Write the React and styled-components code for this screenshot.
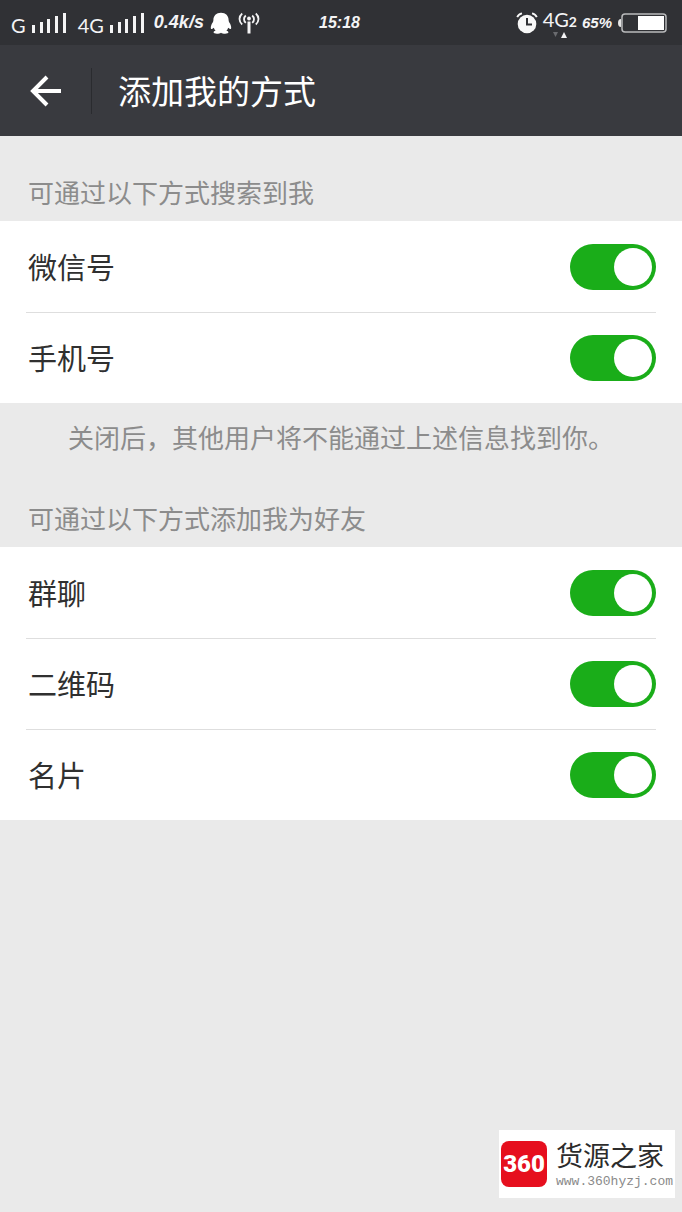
import React, { useState } from 'react';
import styled, { createGlobalStyle } from 'styled-components';

const searchOptions = [
  { id: 'wechat', label: '微信号' },
  { id: 'phone', label: '手机号' },
];

const friendOptions = [
  { id: 'group', label: '群聊' },
  { id: 'qrcode', label: '二维码' },
  { id: 'card', label: '名片' },
];

const SignalIcon = () => (
  <svg width="36" height="22" viewBox="0 0 36 22" fill="#f4f4f5" aria-hidden="true">
    <rect x="0" y="13" width="3" height="8" />
    <rect x="8" y="10" width="3" height="11" />
    <rect x="15" y="7" width="3" height="14" />
    <rect x="23" y="4" width="3" height="17" />
    <rect x="31" y="1" width="3" height="20" />
  </svg>
);

const PenguinIcon = () => (
  <svg width="22" height="22" viewBox="0 0 22 22" fill="#ffffff" aria-hidden="true">
    <path d="M11 .8C6.200.8 3.400 4 3.400 8c0 1-.2 1.500-.7 2.400C1.400 12.200.8 14 .8 15.800c0 1.400.8 1.600 1.600.9l1.400-1c.4 1.200 1 2.200 1.800 3.100-1.200.3-2 .8-2 1.500 0 1 1.500 1.400 3.300 1.400 1.700 0 3.200-.3 4.100-1 .9.7 2.400 1 4.100 1 1.800 0 3.300-.4 3.300-1.400 0-.7-.8-1.200-2-1.500.8-.9 1.400-1.900 1.800-3.100l1.400 1c.8.7 1.600.5 1.600-.9 0-1.800-.6-3.600-1.900-5.400-.5-.9-.7-1.400-.7-2.400C18.600 4 15.800.8 11 .8z" />
  </svg>
);

const AntennaIcon = () => (
  <svg width="22" height="22" viewBox="0 0 22 22" fill="none" stroke="#f4f4f5" strokeWidth="1.8" aria-hidden="true">
    <path d="M4.200 1.500C.6 4.600.6 9.400 4.200 12.500M7.800 3.500C5.400 5.600 5.400 8.800 7.800 10.900M17.800 1.500c3.600 3.100 3.600 7.900 0 11M14.200 3.500c2.400 2.100 2.400 5.300 0 7.400" />
    <circle cx="11" cy="6.500" r="1.900" fill="#f4f4f5" stroke="none" />
    <path d="M11 9.500V21.500" strokeWidth="3" />
  </svg>
);

const AlarmIcon = () => (
  <svg width="22" height="22" viewBox="0 0 22 22" fill="none" aria-hidden="true">
    <circle cx="11" cy="12" r="9.300" fill="#f8f8f8" />
    <path d="M11 6V12.500H16" stroke="#303135" strokeWidth="2" />
    <path d="M1.200 5.200C2 3.200 3.700 1.800 6 1.300M20.800 5.200C20 3.200 18.300 1.800 16 1.300" stroke="#f8f8f8" strokeWidth="1.800" />
  </svg>
);

const DataArrows = () => (
  <svg width="16" height="6" viewBox="0 0 16 6" aria-hidden="true">
    <path d="M1 0h5L3.500 5z" fill="#6a6b6f" />
    <path d="M9 6h6L12 0z" fill="#f4f4f5" />
  </svg>
);

const BatteryIcon = () => (
  <svg width="51" height="22" viewBox="0 0 51 22" aria-hidden="true">
    <path d="M4 7C2 7 1 8.500 1 11s1 4 3 4z" fill="#e6e6e6" />
    <rect x="5" y="2" width="44" height="18" rx="3" fill="none" stroke="#b9babc" strokeWidth="1.500" />
    <rect x="21" y="4" width="26" height="14" fill="#ffffff" />
  </svg>
);

const BackIcon = () => (
  <svg width="34" height="34" viewBox="0 0 34 34" fill="none" stroke="#ffffff" strokeWidth="4" aria-hidden="true">
    <path d="M32 17H4M18 3L4 17l14 14" />
  </svg>
);

const SettingRow = ({ id, label }) => {
  const [checked, setChecked] = useState(true);

  return (
    <Row>
      <RowLabel htmlFor={id}>{label}</RowLabel>
      <Switch id={id} checked={checked} onChange={() => setChecked(!checked)} />
    </Row>
  );
};

const App = () => {
  return (
    <Page>
      <GlobalStyle />

      <StatusBar>
        <StatusGroup>
          <Network>G</Network>
          <SignalIcon />
          <Network $spaced>4G</Network>
          <SignalIcon />
          <Speed>0.4k/s</Speed>
          <PenguinIcon />
          <AntennaIcon />
        </StatusGroup>
        <Clock>15:18</Clock>
        <StatusGroup $end>
          <AlarmIcon />
          <DataType>
            <span>4G<b>2</b></span>
            <DataArrows />
          </DataType>
          <BatteryLevel>65%</BatteryLevel>
          <BatteryIcon />
        </StatusGroup>
      </StatusBar>

      <Header>
        <BackButton type="button" aria-label="返回">
          <BackIcon />
        </BackButton>
        <Title>添加我的方式</Title>
      </Header>

      <main>
        <SectionTitle>可通过以下方式搜索到我</SectionTitle>
        <List>
          {searchOptions.map(option => (
            <SettingRow key={option.id} {...option} />
          ))}
        </List>
        <Hint>关闭后，其他用户将不能通过上述信息找到你。</Hint>

        <SectionTitle $compact>可通过以下方式添加我为好友</SectionTitle>
        <List>
          {friendOptions.map(option => (
            <SettingRow key={option.id} {...option} />
          ))}
        </List>
      </main>

      <Watermark>
        <Badge>360</Badge>
        <div>
          <SiteName>货源之家</SiteName>
          <SiteUrl>www.360hyzj.com</SiteUrl>
        </div>
      </Watermark>
    </Page>
  );
};

const GlobalStyle = createGlobalStyle`
  * {
    box-sizing: border-box;
  }

  body {
    margin: 0;
    background: #eaeaea;
    font-family: "Liberation Sans", "Noto Sans CJK SC", sans-serif;
  }

  svg {
    flex-shrink: 0;
  }
`;

const Page = styled.div`
  position: relative;
  min-height: 100vh;
  background: #eaeaea;
`;

// Barra de status
const StatusBar = styled.div`
  display: grid;
  grid-template-columns: 1fr auto 1fr;
  align-items: center;
  height: 45px;
  padding: 0 14px 0 11px;
  background: #303135;
  color: #f4f4f5;
`;

const StatusGroup = styled.div`
  display: flex;
  align-items: center;
  justify-content: ${props => props.$end ? 'flex-end' : 'flex-start'};
  gap: ${props => props.$end ? '5px' : '6px'};
`;

const Network = styled.span`
  margin-left: ${props => props.$spaced ? '4px' : '0'};
  padding-top: 4px;
  font-family: Lato, sans-serif;
  font-size: 20px;
  line-height: 24px;
`;

const Speed = styled.span`
  margin-left: 2px;
  font-size: 18px;
  font-style: italic;
  font-weight: 700;
`;

const Clock = styled.span`
  font-size: 16px;
  font-style: italic;
  font-weight: 700;
`;

const DataType = styled.span`
  display: flex;
  flex-direction: column;
  align-items: center;
  padding-top: 2px;
  font-family: Lato, sans-serif;
  font-size: 20px;
  line-height: 20px;

  b {
    font-size: 14px;
  }
`;

const BatteryLevel = styled.span`
  font-size: 15px;
  font-style: italic;
  font-weight: 700;
`;

// Cabeçalho
const Header = styled.header`
  display: flex;
  align-items: center;
  height: 91px;
  background: #393a3f;
`;

const BackButton = styled.button`
  display: flex;
  align-items: center;
  justify-content: center;
  width: 92px;
  height: 46px;
  padding: 0;
  border: 0;
  border-right: 1px solid #2a2b2f;
  background: none;
  cursor: pointer;
`;

const Title = styled.h1`
  margin: 0;
  padding: 4px 0 0 26px;
  color: #ffffff;
  font-size: 33px;
  font-weight: 400;
  line-height: 46px;
`;

// Conteúdo
const SectionTitle = styled.h2`
  margin: 0;
  padding: ${props => props.$compact ? '29px' : '39px'} 28px 8px;
  color: #8c8c8c;
  font-size: 26px;
  font-weight: 400;
  line-height: 38px;
`;

const List = styled.div`
  padding: 0 26px;
  background: #ffffff;
`;

const Row = styled.div`
  display: flex;
  align-items: center;
  justify-content: space-between;
  height: 91px;

  & + & {
    border-top: 1px solid #dedede;
  }
`;

const RowLabel = styled.label`
  flex: 1;
  padding: 4px 0 0 2px;
  color: #303030;
  font-size: 29px;
  line-height: 40px;
`;

const Switch = styled.input.attrs({ type: 'checkbox', role: 'switch' })`
  appearance: none;
  display: flex;
  align-items: center;
  justify-content: ${props => props.checked ? 'flex-end' : 'flex-start'};
  width: 86px;
  height: 46px;
  margin: 0;
  padding: 4px;
  border-radius: 23px;
  background: ${props => props.checked ? '#1aad19' : '#cfcfcf'};
  cursor: pointer;

  &::before {
    content: '';
    width: 38px;
    height: 38px;
    border-radius: 50%;
    background: #ffffff;
  }
`;

const Hint = styled.p`
  margin: 0;
  padding: 17px 28px 14px;
  color: #8c8c8c;
  font-size: 26px;
  line-height: 38px;
  text-align: center;
`;

// Marca d'água sobre a página
const Watermark = styled.div`
  position: absolute;
  right: 7px;
  bottom: 14px;
  display: flex;
  align-items: center;
  gap: 9px;
  width: 176px;
  height: 68px;
  padding-left: 2px;
  background: #ffffff;
`;

const Badge = styled.span`
  display: flex;
  flex-shrink: 0;
  align-items: center;
  justify-content: center;
  width: 46px;
  height: 46px;
  border-radius: 8px;
  background: #e60f1e;
  color: #ffffff;
  font-family: Roboto, sans-serif;
  font-size: 24px;
  font-weight: 900;
`;

const SiteName = styled.div`
  color: #2c2c2c;
  font-family: "Noto Sans CJK SC", sans-serif;
  font-size: 27px;
  line-height: 36px;
`;

const SiteUrl = styled.div`
  color: #8a8a8a;
  font-family: "Liberation Mono", monospace;
  font-size: 13px;
  line-height: 18px;
`;

export default App;
